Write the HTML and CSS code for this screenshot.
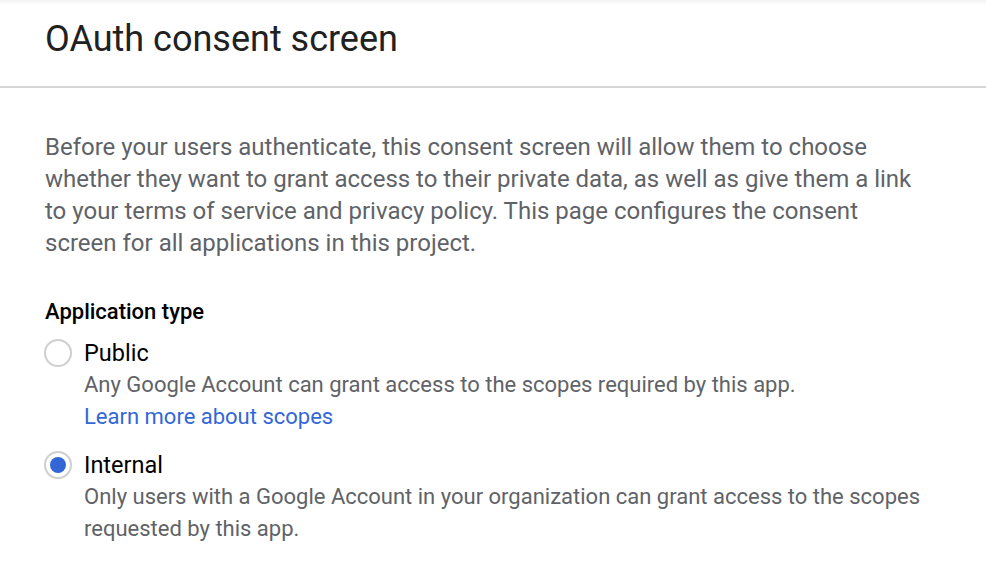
FILE: index.html
```html
<!DOCTYPE html>
<html>
<head>
<meta charset="utf-8">
<link rel="stylesheet" href="styles.css">
</head>
<body>
<div class="page">
  <header class="header">
    <h1 class="title">OAuth consent screen</h1>
  </header>
  <main class="content">
    <p class="intro">Before your users authenticate, this consent screen will allow them to choose whether they want to grant access to their private data, as well as give them a link to your terms of service and privacy policy. This page configures the consent screen for all applications in this project.</p>
    <div class="group-label">Application type</div>
    <div class="option">
      <span class="radio"></span>
      <div class="option-body">
        <div class="option-title">Public</div>
        <div class="option-desc">Any Google Account can grant access to the scopes required by this app.</div>
        <a class="link" href="#">Learn more about scopes</a>
      </div>
    </div>
    <div class="option">
      <span class="radio checked"></span>
      <div class="option-body">
        <div class="option-title">Internal</div>
        <div class="option-desc">Only users with a Google Account in your organization can grant access to the scopes requested by this app.</div>
      </div>
    </div>
  </main>
</div>
</body>
</html>
```

FILE: styles.css
```css
html, body {
  margin: 0;
  padding: 0;
  background: #fff;
}
body {
  font-family: Roboto, "Liberation Sans", Arial, sans-serif;
  color: #212121;
}
.page {
  width: 986px;
  height: 570px;
  overflow: hidden;
  background: linear-gradient(to bottom, #f2f2f2 0px, #fff 5px) no-repeat;
}
.header {
  height: 86px;
  border-bottom: 2px solid #d6d6d6;
  padding-left: 45px;
  display: flex;
  align-items: center;
}
.title {
  margin: 0;
  font-size: 36px;
  font-weight: 400;
  color: #212121;
  line-height: 40px;
  position: relative;
  top: -4px;
}
.content {
  padding: 43px 45px 0 45px;
}
.intro {
  margin: 0;
  font-size: 24px;
  line-height: 32px;
  color: #5f6368;
  width: 890px;
}
.group-label {
  margin-top: 39px;
  font-size: 22px;
  font-weight: 500;
  color: #000;
  line-height: 28px;
}
.option {
  display: flex;
  gap: 12px;
  margin-top: 13px;
}
.option + .option {
  margin-top: 18px;
}
.radio {
  flex: none;
  width: 24px;
  height: 24px;
  border: 2px solid #cfcfcf;
  border-radius: 50%;
  margin-left: -1px;
  display: flex;
  align-items: center;
  justify-content: center;
}
.radio.checked::after {
  content: "";
  width: 16px;
  height: 16px;
  border-radius: 50%;
  background: #3367d6;
}
.option-title {
  font-size: 23.5px;
  line-height: 28px;
  color: #000;
}
.option-desc {
  margin-top: 2px;
  font-size: 22px;
  line-height: 32px;
  color: #5f6368;
  width: 870px;
}
.link {
  display: block;
  font-size: 22px;
  line-height: 32px;
  color: #3367d6;
  text-decoration: none;
}
```
